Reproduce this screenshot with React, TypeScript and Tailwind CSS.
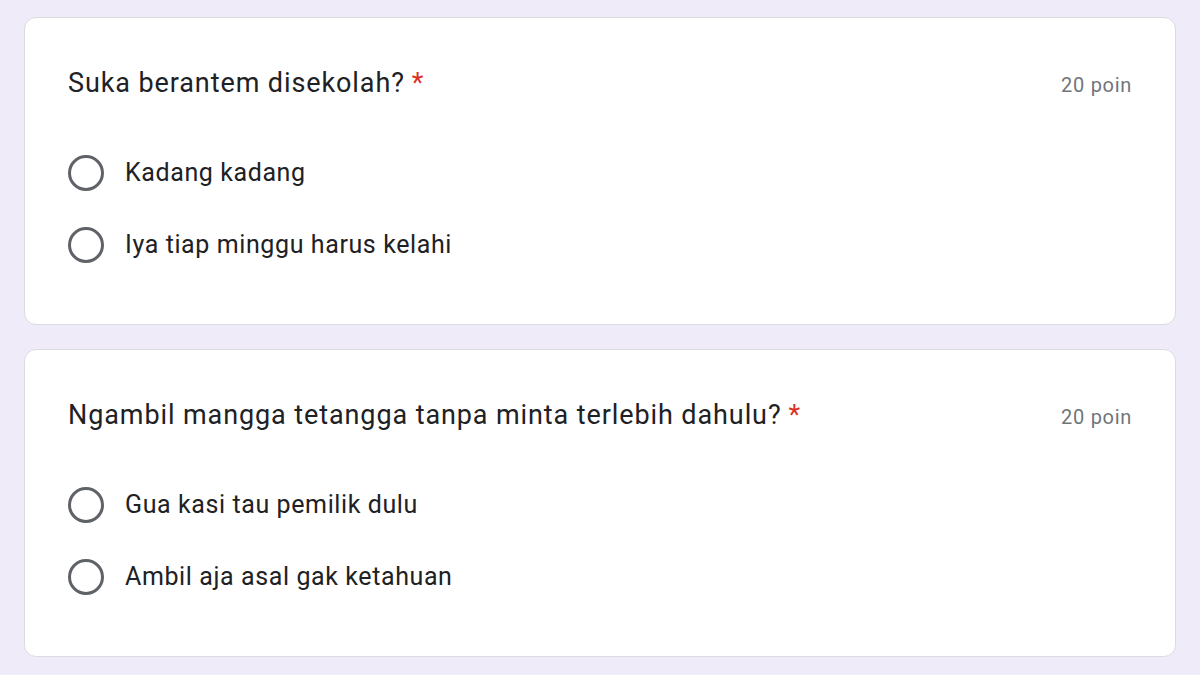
const questions = [
  {
    title: "Suka berantem disekolah?",
    points: "20 poin",
    options: ["Kadang kadang", "Iya tiap minggu harus kelahi"],
  },
  {
    title: "Ngambil mangga tetangga tanpa minta terlebih dahulu?",
    points: "20 poin",
    options: ["Gua kasi tau pemilik dulu", "Ambil aja asal gak ketahuan"],
  },
];

function Radio() {
  return <span className="w-[36px] h-[36px] rounded-full border-[3px] border-[#5f6368] shrink-0" />;
}

function QuestionCard({ title, points, options }: { title: string; points: string; options: string[] }) {
  return (
    <div className="bg-white rounded-[12px] border border-[#dadce0] h-[308px] px-[43px] pt-[47px]">
      <div className="flex items-center justify-between h-[36px]">
        <div className="text-[27px] tracking-[0.9px] text-[#202124] leading-none">
          {title}
          <span className="text-[#d93025] ml-[7px]">*</span>
        </div>
        <span className="text-[20px] tracking-[0.7px] text-[#70757a] mt-[4px]">{points}</span>
      </div>
      <div className="mt-[36px]">
        {options.map((opt) => (
          <label key={opt} className="flex items-center h-[72px] gap-[21px]">
            <Radio />
            <span className="text-[25px] tracking-[0.6px] text-[#202124]">{opt}</span>
          </label>
        ))}
      </div>
    </div>
  );
}

export default function App() {
  return (
    <div
      className="min-h-screen bg-[#f0ebf8] px-[24px] pt-[17px] flex flex-col gap-[24px]"
      style={{ fontFamily: "Roboto, 'Noto Sans', sans-serif" }}
    >
      {questions.map((q) => (
        <QuestionCard key={q.title} {...q} />
      ))}
    </div>
  );
}
